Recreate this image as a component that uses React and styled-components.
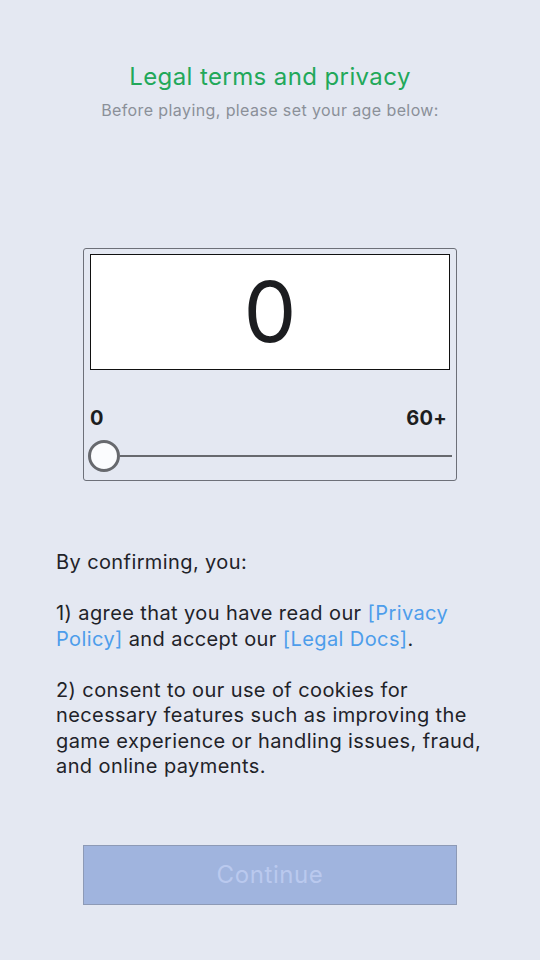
import React from "react";
import styled, { createGlobalStyle } from "styled-components";

const Global = createGlobalStyle`
  html, body { margin: 0; padding: 0; background: #e4e8f2; }
  body {
    font-family: Inter, "Noto Sans", sans-serif;
    letter-spacing: 0.025em;
    -webkit-font-smoothing: antialiased;
  }
`;

const Page = styled.div`
  min-height: 960px;
  display: flex;
  flex-direction: column;
  align-items: center;
  padding-top: 62px;
  box-sizing: border-box;
`;

const Title = styled.h1`
  margin: 0;
  font-size: 24px;
  line-height: 30px;
  font-weight: 400;
  color: #22a85a;
  text-align: center;
`;

const Subtitle = styled.p`
  margin: 8px 0 0;
  font-size: 16px;
  line-height: 20px;
  color: #8b9099;
  text-align: center;
`;

const Card = styled.div`
  margin-top: 128px;
  width: 374px;
  box-sizing: border-box;
  border: 1px solid #6d7079;
  border-radius: 3px;
  padding: 5px 6px 8px;
  display: flex;
  flex-direction: column;
`;

const ValueBox = styled.div`
  height: 116px;
  box-sizing: border-box;
  background: #ffffff;
  border: 1px solid #111;
  display: flex;
  align-items: center;
  justify-content: center;
  font-size: 84px;
  line-height: 1;
  letter-spacing: 0;
  color: #1c1d20;
  font-weight: 400;
`;

const Labels = styled.div`
  margin-top: 36px;
  display: flex;
  justify-content: space-between;
  padding-right: 3px;
  font-size: 20px;
  line-height: 24px;
  font-weight: 700;
  letter-spacing: 0.01em;
  color: #1c1d20;
`;

const Slider = styled.div`
  margin: 10px -2px 0;
  display: flex;
  align-items: center;
  height: 32px;
`;

const Thumb = styled.div`
  width: 32px;
  height: 32px;
  box-sizing: border-box;
  border: 3px solid #67696e;
  border-radius: 50%;
  background: #fbfcfe;
  flex: none;
`;

const Track = styled.div`
  flex: 1;
  height: 2px;
  background: #67696e;
`;

const Terms = styled.div`
  margin-top: 69px;
  width: 428px;
  font-size: 20px;
  line-height: 25.5px;
  color: #1f2329;
  display: flex;
  flex-direction: column;
  gap: 25.5px;
`;

const Para = styled.p`
  margin: 0;
`;

const Link = styled.a`
  color: #4d9deb;
  text-decoration: none;
`;

const Button = styled.button`
  margin-top: 65px;
  width: 374px;
  height: 60px;
  background: #a0b4de;
  border: 1px solid #8d9ab6;
  color: #bac9ee;
  font-family: Inter, "Noto Sans", sans-serif;
  font-size: 24px;
  letter-spacing: 0.025em;
  padding: 0;
`;

export default function App() {
  return (
    <>
      <Global />
      <Page>
        <Title>Legal terms and privacy</Title>
        <Subtitle>Before playing, please set your age below:</Subtitle>
        <Card>
          <ValueBox>0</ValueBox>
          <Labels>
            <span>0</span>
            <span>60+</span>
          </Labels>
          <Slider>
            <Thumb />
            <Track />
          </Slider>
        </Card>
        <Terms>
          <Para>By confirming, you:</Para>
          <Para>
            1) agree that you have read our <Link>[Privacy Policy]</Link> and
            accept our <Link>[Legal Docs]</Link>.
          </Para>
          <Para>
            2) consent to our use of cookies for necessary features such as
            improving the game experience or handling issues, fraud, and
            online payments.
          </Para>
        </Terms>
        <Button>Continue</Button>
      </Page>
    </>
  );
}
